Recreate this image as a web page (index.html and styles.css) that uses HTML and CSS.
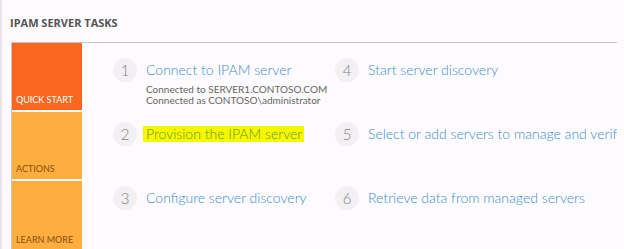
FILE: index.html
```html
<!DOCTYPE html>
<html lang="en">

<head>
    <meta charset="UTF-8">
    <title>IPAM Server Tasks</title>
    <link rel="stylesheet" href="styles.css">
</head>

<body>
    <div class="page">
        <h2 class="title">IPAM SERVER TASKS</h2>
        <div class="panel">
            <div class="tabs">
                <div class="tab tab-active">QUICK START</div>
                <div class="tab">ACTIONS</div>
                <div class="tab tab-last">LEARN MORE</div>
            </div>
            <div class="tasks">
                <div class="task">
                    <span class="step">1</span>
                    <div class="task-body">
                        <a class="task-link">Connect to IPAM server</a>
                        <p class="task-note">Connected to SERVER1.CONTOSO.COM<br>Connected as CONTOSO\administrator</p>
                    </div>
                </div>
                <div class="task">
                    <span class="step">4</span>
                    <div class="task-body">
                        <a class="task-link">Start server discovery</a>
                    </div>
                </div>
                <div class="task">
                    <span class="step">2</span>
                    <div class="task-body">
                        <a class="task-link highlight">Provision the IPAM server</a>
                    </div>
                </div>
                <div class="task">
                    <span class="step">5</span>
                    <div class="task-body">
                        <a class="task-link">Select or add servers to manage and verify IPAM access</a>
                    </div>
                </div>
                <div class="task">
                    <span class="step">3</span>
                    <div class="task-body">
                        <a class="task-link">Configure server discovery</a>
                    </div>
                </div>
                <div class="task">
                    <span class="step">6</span>
                    <div class="task-body">
                        <a class="task-link">Retrieve data from managed servers</a>
                    </div>
                </div>
            </div>
        </div>
    </div>
</body>

</html>
```

FILE: styles.css
```css
body {
    margin: 0;
    font-family: "Open Sans", "Noto Sans", sans-serif;
    background-color: #fdfbfd;
    overflow: hidden;
}

.page {
    height: 249px;
    border-left: 2px solid #e6e4e6;
    padding-left: 9px;
    padding-right: 7px;
}

.title {
    margin: 0 0 0 -1px;
    padding: 15px 0 0 0;
    height: 42px;
    box-sizing: border-box;
    font-size: 11px;
    font-weight: 700;
    color: #555;
}

.panel {
    display: flex;
    border-top: 1px solid #c8c6c8;
    border-left: 1px solid #c8c6c8;
    height: 207px;
}

.tabs {
    width: 70px;
    display: flex;
    flex-direction: column;
    gap: 2px;
}

.tab {
    height: 67px;
    background-color: #fdae3e;
    color: #8a4d14;
    font-family: Lato, sans-serif;
    font-size: 9px;
    display: flex;
    align-items: flex-end;
    padding: 0 0 5px 4px;
    box-sizing: border-box;
}

.tab-active {
    background-color: #f9661f;
    color: #fff;
}

.tab-last {
    flex: 1;
}

.tasks {
    flex: 1;
    display: grid;
    grid-template-columns: 222px 1fr;
    grid-auto-rows: 64px;
    padding: 15px 0 0 31px;
    overflow: hidden;
}

.task {
    display: flex;
    align-items: flex-start;
    gap: 9px;
    min-width: 0;
}

.step {
    flex: none;
    width: 24px;
    height: 24px;
    border-radius: 50%;
    background-color: #f2f0f2;
    color: #858385;
    font-family: Lato, sans-serif;
    font-weight: 300;
    font-size: 15px;
    line-height: 24px;
    text-align: center;
}

.task-body {
    white-space: nowrap;
}

.task-link {
    display: inline-block;
    font-family: Lato, sans-serif;
    font-weight: 300;
    font-size: 14px;
    line-height: 24px;
    color: #3a8bd2;
}

.highlight {
    background-color: #f7f700;
    color: #5b9a1c;
    line-height: 16px;
    margin: 4px 0 0 -3px;
    padding: 0 2px 0 3px;
}

.task-note {
    margin: 2px 0 0 0;
    font-family: Lato, sans-serif;
    font-size: 10px;
    line-height: 11px;
    color: #666;
}
```
